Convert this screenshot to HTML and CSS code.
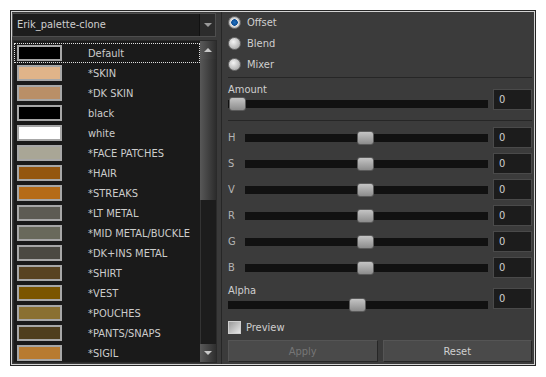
FILE: index.html
```html
<!DOCTYPE html>
<html lang="en">
<head>
  <meta charset="UTF-8" />
  <title>Palette Colour Editor</title>
  <link rel="stylesheet" href="styles.css">
</head>
<body>

  <div class="window">

    <div class="left">
      <div class="combo">
        <span class="combo-text">Erik_palette-clone</span>
        <span class="combo-btn"><span class="tri-down"></span></span>
      </div>

      <div class="list">
        <ul class="rows">
          <li class="row focus"><span class="swatch" style="background:#000000"></span><span class="name">Default</span></li>
          <li class="row"><span class="swatch" style="background:#e0b489"></span><span class="name">*SKIN</span></li>
          <li class="row"><span class="swatch" style="background:#b98f67"></span><span class="name">*DK SKIN</span></li>
          <li class="row"><span class="swatch" style="background:#000000"></span><span class="name">black</span></li>
          <li class="row"><span class="swatch" style="background:#ffffff"></span><span class="name">white</span></li>
          <li class="row"><span class="swatch" style="background:#a9a696"></span><span class="name">*FACE PATCHES</span></li>
          <li class="row"><span class="swatch" style="background:#94560f"></span><span class="name">*HAIR</span></li>
          <li class="row"><span class="swatch" style="background:#b56b17"></span><span class="name">*STREAKS</span></li>
          <li class="row"><span class="swatch" style="background:#5d5b53"></span><span class="name">*LT METAL</span></li>
          <li class="row"><span class="swatch" style="background:#69695b"></span><span class="name">*MID METAL/BUCKLE</span></li>
          <li class="row"><span class="swatch" style="background:#4b4942"></span><span class="name">*DK+INS METAL</span></li>
          <li class="row"><span class="swatch" style="background:#584321"></span><span class="name">*SHIRT</span></li>
          <li class="row"><span class="swatch" style="background:#7b5500"></span><span class="name">*VEST</span></li>
          <li class="row"><span class="swatch" style="background:#8a7032"></span><span class="name">*POUCHES</span></li>
          <li class="row"><span class="swatch" style="background:#4f3e1d"></span><span class="name">*PANTS/SNAPS</span></li>
          <li class="row"><span class="swatch" style="background:#b87b30"></span><span class="name">*SIGIL</span></li>
        </ul>
        <div class="scrollbar">
          <div class="sb-btn"><span class="tri-up"></span></div>
          <div class="sb-thumb"></div>
          <div class="sb-track"></div>
          <div class="sb-btn"><span class="tri-down light"></span></div>
        </div>
      </div>
    </div>

    <div class="right">
      <div class="radios">
        <label class="radio-row"><span class="radio checked"></span>Offset</label>
        <label class="radio-row"><span class="radio"></span>Blend</label>
        <label class="radio-row"><span class="radio"></span>Mixer</label>
      </div>

      <div class="sep"></div>

      <div class="labelled amount">
        <div class="labelled-main">
          <div class="label">Amount</div>
          <div class="slider"><div class="track"></div><div class="thumb" style="left:1px"></div></div>
        </div>
        <div class="num">0</div>
      </div>

      <div class="sep flush"></div>

      <div class="channels">
        <div class="channel"><span class="ch-label">H</span><div class="slider"><div class="track"></div><div class="thumb" style="left:112px"></div></div><div class="num">0</div></div>
        <div class="channel"><span class="ch-label">S</span><div class="slider"><div class="track"></div><div class="thumb" style="left:112px"></div></div><div class="num">0</div></div>
        <div class="channel"><span class="ch-label">V</span><div class="slider"><div class="track"></div><div class="thumb" style="left:112px"></div></div><div class="num">0</div></div>
        <div class="channel"><span class="ch-label">R</span><div class="slider"><div class="track"></div><div class="thumb" style="left:112px"></div></div><div class="num">0</div></div>
        <div class="channel"><span class="ch-label">G</span><div class="slider"><div class="track"></div><div class="thumb" style="left:112px"></div></div><div class="num">0</div></div>
        <div class="channel"><span class="ch-label">B</span><div class="slider"><div class="track"></div><div class="thumb" style="left:112px"></div></div><div class="num">0</div></div>
      </div>

      <div class="labelled alpha">
        <div class="labelled-main">
          <div class="label">Alpha</div>
          <div class="slider"><div class="track"></div><div class="thumb" style="left:121px"></div></div>
        </div>
        <div class="num">0</div>
      </div>

      <label class="check-row"><span class="checkbox"></span>Preview</label>

      <div class="buttons">
        <button class="btn" disabled>Apply</button>
        <button class="btn">Reset</button>
      </div>
    </div>

  </div>

</body>
</html>
```

FILE: styles.css
```css
body {
  margin: 0;
  background: #ffffff;
  font-family: "DejaVu Sans Condensed", "DejaVu Sans", sans-serif;
  font-size: 11px;
  color: #c8c8c8;
}

.window {
  margin: 10px;
  width: 526px;
  height: 356px;
  box-sizing: border-box;
  border: 1px solid #262626;
  box-shadow: inset 0 0 0 1px #d4d4d4;
  background: #3a3a3a;
  padding: 1px;
  display: flex;
}

/* ---- left : palette list ---- */

.left {
  width: 206px;
  display: flex;
  flex-direction: column;
}

.combo {
  margin-top: 1px;
  width: 204px;
  height: 24px;
  box-sizing: border-box;
  border: 1px solid #4e4e4e;
  background: #1d1d1d;
  display: flex;
}

.combo-text {
  flex: 1;
  padding-left: 4px;
  line-height: 22px;
  color: #cfcfcf;
}

.combo-btn {
  width: 15px;
  border-left: 1px solid #111;
  background: #2c2c2c;
  display: flex;
  align-items: center;
  justify-content: center;
}

.tri-down {
  width: 0;
  height: 0;
  border-left: 4px solid transparent;
  border-right: 4px solid transparent;
  border-top: 4px solid #9a9a9a;
}

.tri-down.light {
  border-top-color: #c8c8c8;
}

.tri-up {
  width: 0;
  height: 0;
  border-left: 4px solid transparent;
  border-right: 4px solid transparent;
  border-bottom: 4px solid #c8c8c8;
}

.list {
  margin: 3px 0 0 1px;
  height: 323px;
  width: 204px;
  box-sizing: border-box;
  border: 1px solid #2a2a2a;
  background: #1a1a1a;
  display: flex;
}

.rows {
  list-style: none;
  margin: 0;
  padding: 2px 0 0 0;
  flex: 1;
}

.row {
  height: 20px;
  display: flex;
  align-items: center;
  box-sizing: border-box;
  padding-left: 3px;
}

.row.focus {
  outline: 1px dotted #e0e0e0;
  outline-offset: -1px;
}

.swatch {
  width: 45px;
  height: 16px;
  box-sizing: border-box;
  border: 2px solid #a7a7a7;
}

.name {
  margin-left: 26px;
  color: #cccccc;
}

.scrollbar {
  width: 16px;
  display: flex;
  flex-direction: column;
}

.sb-btn {
  height: 18px;
  background: linear-gradient(to right, #5a5a5a, #2e2e2e);
  display: flex;
  align-items: center;
  justify-content: center;
}

.sb-thumb {
  height: 141px;
  background: linear-gradient(to right, #585858, #2c2c2c);
}

.sb-track {
  flex: 1;
  background: #1c1c1c;
  border-left: 1px solid #333;
}

/* ---- right : colour controls ---- */

.right {
  flex: 1;
  margin-left: 3px;
  border-left: 1px solid #262626;
  background: #3b3b3b;
  padding: 0 2px 0 6px;
  color: #cfcfcf;
}

.radio-row {
  height: 21px;
  display: flex;
  align-items: center;
}

.radio {
  width: 11px;
  height: 11px;
  border-radius: 50%;
  border: 1px solid #6e6e6e;
  background: radial-gradient(circle at 40% 35%, #f4f4f4, #b4b4b4 70%);
  margin-right: 6px;
}

.radio.checked {
  background: radial-gradient(circle, #1f6fc0 0, #0d4f96 3px, #e8e8e8 3.5px, #b8b8b8 70%);
}

.sep {
  height: 1px;
  background: #262626;
  margin-top: 2px;
}

.sep.flush {
  margin-top: 0;
}

.labelled {
  display: flex;
}

.labelled-main {
  flex: 1;
}

.label {
  height: 13px;
  line-height: 13px;
}

.amount {
  height: 42px;
}

.amount .label {
  margin-top: 5px;
}

.amount .num {
  margin-top: 11px;
}

.slider {
  position: relative;
  height: 16px;
  margin-right: 5px;
}

.track {
  position: absolute;
  left: 0;
  right: 0;
  top: 4px;
  height: 8px;
  background: #111111;
}

.thumb {
  position: absolute;
  top: 1px;
  width: 17px;
  height: 14px;
  box-sizing: border-box;
  border: 1px solid #5a5a5a;
  border-radius: 3px;
  background: linear-gradient(#c4c4c4, #8c8c8c);
}

.num {
  width: 39px;
  height: 21px;
  box-sizing: border-box;
  border: 1px solid #4a4a4a;
  background: #1c1c1c;
  padding-left: 5px;
  line-height: 20px;
  color: #cfcfcf;
}

.channels {
  margin-top: 6px;
  display: flex;
  flex-direction: column;
  gap: 5px;
}

.channel {
  display: flex;
  align-items: center;
  height: 21px;
}

.ch-label {
  width: 17px;
  color: #b4b4b4;
}

.channel .slider {
  flex: 1;
}

.alpha {
  margin-top: 6px;
}

.alpha .num {
  margin-top: 4px;
}

.check-row {
  margin-top: 8px;
  height: 13px;
  display: flex;
  align-items: center;
}

.checkbox {
  width: 11px;
  height: 11px;
  border: 1px solid #cfcfcf;
  background: linear-gradient(135deg, #9a9a9a, #e6e6e6);
  margin-right: 5px;
}

.buttons {
  margin-top: 6px;
  display: grid;
  grid-template-columns: 1fr 1fr;
  gap: 5px;
}

.btn {
  height: 22px;
  font-family: inherit;
  font-size: 11px;
  background: #4a4a4a;
  border: 1px solid #555;
  border-right-color: #262626;
  border-bottom-color: #262626;
  color: #d0d0d0;
  padding: 0;
}

.btn:disabled {
  color: #767676;
}
```
